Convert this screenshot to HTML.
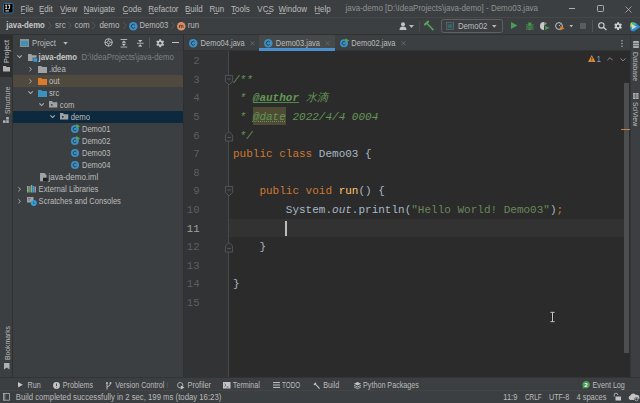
<!DOCTYPE html>
<html><head><meta charset="utf-8">
<style>
*{margin:0;padding:0;box-sizing:border-box}
html,body{width:640px;height:403px;overflow:hidden;background:#3c3f41;font-family:"Liberation Sans",sans-serif;color:#bbbbbb;position:relative}
div,svg,span.a{position:absolute}
svg{overflow:visible}
.t{position:absolute;white-space:nowrap;line-height:12px;transform-origin:0 8.75px;transform:scaleY(1.15)}
.m{font-size:8px}
.nv{font-size:8px}
.tr{font-size:7.7px}
.tb{font-size:7.2px}
.st{font-size:7.5px}
.tab{font-size:7.5px}
.vt{position:absolute;white-space:nowrap;font-size:6.8px;line-height:8px;transform-origin:0 0}
.code{position:absolute;font-family:"Liberation Mono",monospace;font-size:11px;line-height:18.6px;white-space:pre;color:#a9b7c6}
.kw{color:#cc7832}
.cm{color:#629755;font-style:italic}
.tag{color:#629755;font-weight:bold;font-style:italic;text-decoration:underline;text-decoration-thickness:1.3px;text-decoration-color:#4e8a4c}
.ln{position:absolute;font-family:"Liberation Mono",monospace;font-size:11px;line-height:18.6px;color:#5c5f62;white-space:pre;text-align:right}
</style></head><body>

<!-- ============ MENU BAR ============ -->
<div style="left:0;top:0;width:640px;height:18px;background:#3c3f41"></div>
<svg style="left:3px;top:3px" width="10.5" height="10.5" viewBox="0 0 10.5 10.5"><rect x="0.5" y="0.5" width="9.5" height="9.5" rx="1" fill="#000" stroke="#3a6d95" stroke-width="1"/><path d="M2.2 2.2H4.2M3.2 2.2V5.6M2.2 5.6H4.2M5 2.2H7.2M6.6 2.2V5Q6.6 5.7 5.9 5.7H5.2" stroke="#f0f0f0" stroke-width="0.9" fill="none"/><rect x="2.4" y="7.3" width="3.5" height="1.2" fill="#d0d0d0"/></svg>
<div class="t m" style="top:4.2px;left:20.5px;">File</div>
<div class="t m" style="top:4.2px;left:39px;">Edit</div>
<div class="t m" style="top:4.2px;left:60px;">View</div>
<div class="t m" style="top:4.2px;left:83.4px;">Navigate</div>
<div class="t m" style="top:4.2px;left:122.5px;">Code</div>
<div class="t m" style="top:4.2px;left:148.3px;">Refactor</div>
<div class="t m" style="top:4.2px;left:185px;">Build</div>
<div class="t m" style="top:4.2px;left:209.6px;">Run</div>
<div class="t m" style="top:4.2px;left:231px;">Tools</div>
<div class="t m" style="top:4.2px;left:257.3px;">VCS</div>
<div class="t m" style="top:4.2px;left:278.5px;">Window</div>
<div class="t m" style="top:4.2px;left:314.3px;">Help</div>
<!-- mnemonic underlines -->
<div style="left:21px;top:12.6px;width:4px;height:0.7px;background:#999"></div>
<div style="left:39.5px;top:12.6px;width:4px;height:0.7px;background:#999"></div>
<div style="left:60.5px;top:12.6px;width:5px;height:0.7px;background:#999"></div>
<div style="left:84px;top:12.6px;width:5px;height:0.7px;background:#999"></div>
<div style="left:123px;top:12.6px;width:5px;height:0.7px;background:#999"></div>
<div style="left:149px;top:12.6px;width:5px;height:0.7px;background:#999"></div>
<div style="left:185.5px;top:12.6px;width:5px;height:0.7px;background:#999"></div>
<div style="left:214px;top:12.6px;width:4px;height:0.7px;background:#999"></div>
<div style="left:231.5px;top:12.6px;width:4px;height:0.7px;background:#999"></div>
<div style="left:266px;top:12.6px;width:5px;height:0.7px;background:#999"></div>
<div style="left:279px;top:12.6px;width:7px;height:0.7px;background:#999"></div>
<div style="left:315px;top:12.6px;width:5px;height:0.7px;background:#999"></div>
<div class="t m" style="top:4.2px;left:345.5px;top:2.5px;color:#8f9193">java-demo [D:\IdeaProjects\java-demo] - Demo03.java</div>
<div style="left:569px;top:8px;width:6px;height:1px;background:#b0b0b0"></div>
<div style="left:597px;top:5px;width:6.8px;height:6.8px;border:1px solid #a9a9a9;border-radius:1.2px"></div>
<svg style="left:624px;top:4.5px" width="8" height="8" viewBox="0 0 8 8"><path d="M1.5 1.5L7.5 7.5M7.5 1.5L1.5 7.5" stroke="#b0b0b0" stroke-width="0.8"/></svg>

<!-- ============ NAV BAR ============ -->
<div style="left:0;top:17px;width:640px;height:1px;background:#454749"></div>

<div class="t nv" style="left:6.3px;top:20.4px;font-weight:bold;font-size:7.8px;color:#c8c8c8">java-demo</div>
<svg style="left:47.5px;top:21px" width="4" height="9" viewBox="0 0 4 8"><path d="M0.5 0.5L3 4L0.5 7.5" stroke="#66686a" stroke-width="0.6" fill="none"/></svg>
<div class="t nv" style="left:55px;top:20.4px">src</div>
<svg style="left:67.5px;top:21px" width="4" height="9" viewBox="0 0 4 8"><path d="M0.5 0.5L3 4L0.5 7.5" stroke="#66686a" stroke-width="0.6" fill="none"/></svg>
<div class="t nv" style="left:74.6px;top:20.4px">com</div>
<svg style="left:92px;top:21px" width="4" height="9" viewBox="0 0 4 8"><path d="M0.5 0.5L3 4L0.5 7.5" stroke="#66686a" stroke-width="0.6" fill="none"/></svg>
<div class="t nv" style="left:99.4px;top:20.4px">demo</div>
<svg style="left:122.5px;top:21px" width="4" height="9" viewBox="0 0 4 8"><path d="M0.5 0.5L3 4L0.5 7.5" stroke="#66686a" stroke-width="0.6" fill="none"/></svg>
<svg style="left:128.5px;top:21.5px" width="8.5" height="8.5" viewBox="0 0 8 8"><circle cx="4" cy="4" r="4" fill="#3d8fc1"/><path d="M5.4 2.9A1.8 1.8 0 1 0 5.4 5.1" stroke="#1e3c52" stroke-width="0.9" fill="none"/></svg>
<div class="t nv" style="left:139.5px;top:20.4px;font-size:7.6px">Demo03</div>
<svg style="left:171px;top:21px" width="4" height="9" viewBox="0 0 4 8"><path d="M0.5 0.5L3 4L0.5 7.5" stroke="#66686a" stroke-width="0.6" fill="none"/></svg>
<svg style="left:177.3px;top:21.5px" width="8.5" height="8.5" viewBox="0 0 8 8"><circle cx="4" cy="4" r="4" fill="#d9906a"/><path d="M2.3 5.6V3M2.3 3.4Q3.2 2.6 4 3.4V5.6M4 3.4Q4.8 2.6 5.7 3.4V5.6" stroke="#4a2a1a" stroke-width="0.7" fill="none"/></svg>
<div class="t nv" style="left:187.7px;top:20.4px">run</div>

<!-- right toolbar -->
<svg style="left:398.5px;top:21.5px" width="10" height="8" viewBox="0 0 10 8"><circle cx="4" cy="2.3" r="2" fill="#c4c4c4"/><path d="M0.5 8Q0.5 4.6 4 4.6Q7.5 4.6 7.5 8Z" fill="#c4c4c4"/></svg>
<svg style="left:409px;top:25px" width="5" height="3" viewBox="0 0 5 3"><path d="M0 0H5L2.5 3Z" fill="#b8b8b8"/></svg>
<div style="left:419px;top:20.5px;width:1px;height:11px;background:#494c4e"></div>
<svg style="left:424px;top:21px" width="10" height="9.5" viewBox="0 0 10 9.5"><path d="M0.9 3.6L4.2 0.6" stroke="#57a65a" stroke-width="2" stroke-linecap="round"/><path d="M2.8 2.3L9 8.6" stroke="#57a65a" stroke-width="1.5" stroke-linecap="round"/></svg>
<div style="left:440.5px;top:19px;width:62.5px;height:14px;border:0.8px solid #5e6163;border-radius:2.5px"></div>
<svg style="left:446.4px;top:22px" width="8.2" height="7.7" viewBox="0 0 8 8"><rect x="0.4" y="0.4" width="7.2" height="7.2" fill="#3c4345" stroke="#6b6e70" stroke-width="0.7"/><rect x="1.5" y="2.2" width="5" height="4.2" fill="#2f5f70"/><rect x="2.5" y="3.2" width="3" height="2" fill="#3a6e5a"/></svg>
<div class="t" style="left:457.9px;top:20.9px;font-size:7.8px">Demo02</div>
<svg style="left:492.3px;top:24.8px" width="4.5" height="2.8" viewBox="0 0 5 3"><path d="M0 0H5L2.5 3Z" fill="#b8b8b8"/></svg>
<svg style="left:510.8px;top:22.1px" width="6.5" height="7" viewBox="0 0 6.5 7"><path d="M0 0L6.5 3.5L0 7Z" fill="#499c54"/></svg>
<svg style="left:525.8px;top:21.8px" width="7.6" height="8" viewBox="0 0 7.6 8"><path d="M2.3 0.2L3 1.2M5.3 0.2L4.6 1.2" stroke="#499c54" stroke-width="0.7"/><ellipse cx="3.8" cy="1.9" rx="1.6" ry="1.1" fill="#499c54"/><ellipse cx="3.8" cy="5" rx="2.6" ry="2.9" fill="#499c54"/><path d="M0 2.8H1.4M7.6 2.8H6.2M0 5H1.2M7.6 5H6.4M0 7.2H1.4M7.6 7.2H6.2" stroke="#499c54" stroke-width="0.9"/><path d="M1.4 4.2H6.2M1.4 6.1H6.2" stroke="#3c3f41" stroke-width="0.85"/></svg>
<svg style="left:540.3px;top:22.2px" width="9.5" height="8" viewBox="0 0 9.5 8"><path d="M4 0A4 4 0 1 0 4 8Z" fill="#c9c9c9"/><path d="M4 0A4 4 0 0 1 7 1.5L4 4Z" fill="#8a8a8a"/><path d="M5.2 3.8L9.5 6L5.2 8Z" fill="#499c54"/></svg>
<svg style="left:554.9px;top:21.9px" width="9.5" height="8.5" viewBox="0 0 9.5 8.5"><circle cx="4" cy="4" r="3.4" fill="none" stroke="#c4c4c4" stroke-width="1"/><path d="M4 4L5.5 2.5" stroke="#c4c4c4" stroke-width="0.9"/><path d="M5.3 4L9.5 6.3L5.3 8.5Z" fill="#e07f2f"/></svg>
<svg style="left:568.7px;top:25.1px" width="4.5" height="2.3" viewBox="0 0 5 3"><path d="M0 0H5L2.5 3Z" fill="#b8b8b8"/></svg>
<div style="left:580px;top:23px;width:6px;height:6px;background:#5a5d5f"></div>
<div style="left:592.3px;top:20px;width:0.8px;height:12px;background:#515456"></div>
<svg style="left:598.3px;top:21.8px" width="9" height="8.2" viewBox="0 0 9 8.2"><circle cx="3.4" cy="3.4" r="2.7" fill="none" stroke="#cfcfcf" stroke-width="1.1"/><path d="M5.3 5.3L8.5 8" stroke="#cfcfcf" stroke-width="1.2"/></svg>
<svg style="left:614.2px;top:21.8px" width="8.2" height="8.2" viewBox="0 0 10 10"><path d="M3.73 1.74 L3.93 0.22 L6.07 0.22 L6.27 1.74 L7.19 2.27 L8.61 1.68 L9.68 3.53 L8.46 4.46 L8.46 5.54 L9.68 6.47 L8.61 8.32 L7.19 7.73 L6.27 8.26 L6.07 9.78 L3.93 9.78 L3.73 8.26 L2.81 7.73 L1.39 8.32 L0.32 6.47 L1.54 5.54 L1.54 4.46 L0.32 3.53 L1.39 1.68 L2.81 2.27Z" fill="#cfcfcf"/><circle cx="5" cy="5" r="1.5" fill="#3c3f41"/></svg>
<svg style="left:629.5px;top:21.5px" width="10.5" height="9.5" viewBox="0 0 10.5 9.5"><path d="M2 0.3Q1 0.3 0.6 2L0.4 7Q0.6 9.2 2.5 9.3L4 9.2L10.5 5L6 1.2Q4 0.2 2 0.3Z" fill="#2a8fd8"/><path d="M2 0.3Q1 0.3 0.6 2L0.5 6Q2 4 5 3.5L6.5 1.6Q4 0.2 2 0.3Z" fill="#3dbf7a"/><path d="M1.5 0.6Q0.7 1 0.6 2L0.5 5L3 3.5Z" fill="#e5c25a"/><path d="M1.8 2.3L6.8 4.8L1.8 7.4Z" fill="#d8d8c8"/></svg>

<!-- ============ LEFT STRIPE ============ -->
<div style="left:0;top:34px;width:12px;height:343px;background:#3c3f41"></div>
<div style="left:12px;top:34px;width:1px;height:343px;background:#2e3032"></div>
<div style="left:0;top:34px;width:12px;height:43px;background:#2d2f31"></div>
<div class="vt" style="left:3.3px;top:62.5px;transform:rotate(-90deg);color:#c4c4c4;font-size:7.4px">Project</div>
<svg style="left:3px;top:66px" width="7" height="5.5" viewBox="0 0 7 5.5"><path d="M0 0H2.8L3.5 1H7V5.5H0Z" fill="#afb1b3"/></svg>
<div class="vt" style="left:3.5px;top:113.5px;transform:rotate(-90deg);color:#bbbbbb">Structure</div>
<svg style="left:3.3px;top:116.8px" width="6" height="6" viewBox="0 0 6 6"><rect x="3.2" y="0" width="2.6" height="2.6" fill="#afb1b3"/><rect x="0" y="3.3" width="2.6" height="2.6" fill="#afb1b3"/><rect x="3.2" y="3.3" width="2.6" height="2.6" fill="#afb1b3"/></svg>
<div class="vt" style="left:3.6px;top:359.8px;transform:rotate(-90deg);color:#bbbbbb">Bookmarks</div>
<svg style="left:3.5px;top:362.7px" width="5.5" height="6.5" viewBox="0 0 5.5 6.5"><path d="M0 0H5.5V6.5L2.75 4.5L0 6.5Z" fill="#afb1b3"/></svg>

<!-- ============ PROJECT PANEL ============ -->
<div style="left:13.3px;top:34px;width:169.5px;height:343px;background:#3c3f41"></div>
<div style="left:183px;top:34px;width:1px;height:343px;background:#2e3032"></div>
<svg style="left:20px;top:38.7px" width="9" height="8" viewBox="0 0 9 8"><rect x="0" y="0" width="9" height="8" fill="#8d9091"/><rect x="1" y="2" width="7" height="5" fill="#3d92b8"/></svg>
<div class="t" style="left:32px;top:37.7px;font-size:7.7px">Project</div>
<svg style="left:63.3px;top:42px" width="5" height="2.7" viewBox="0 0 5 3"><path d="M0 0H5L2.5 3Z" fill="#b8b8b8"/></svg>
<svg style="left:104.2px;top:38.3px" width="9.2" height="8.8" viewBox="0 0 10 10"><circle cx="5" cy="5" r="4.2" fill="none" stroke="#c4c4c4" stroke-width="1"/><circle cx="5" cy="5" r="1.7" fill="none" stroke="#c4c4c4" stroke-width="0.9"/><path d="M5 0.5V3M5 7V9.5M0.5 5H3M7 5H9.5" stroke="#c4c4c4" stroke-width="0.9"/></svg>
<svg style="left:120.4px;top:38.5px" width="7.8" height="8.5" viewBox="0 0 8 9"><path d="M0.5 0.5H7.5M0.5 8.5H7.5" stroke="#c4c4c4" stroke-width="0.9"/><path d="M4 1.5L6.3 4H1.7ZM4 7.5L6.3 5H1.7Z" fill="#c4c4c4"/></svg>
<svg style="left:135.9px;top:38.5px" width="8.4" height="8.5" viewBox="0 0 8 9"><path d="M0.5 4.5H7.5" stroke="#c4c4c4" stroke-width="0.9"/><path d="M4 3.5L6.3 1H1.7ZM4 5.5L6.3 8H1.7Z" fill="#c4c4c4"/></svg>
<div style="left:149.3px;top:38px;width:0.6px;height:10px;background:#55585a"></div>
<svg style="left:155.6px;top:38.5px" width="8.4" height="8.4" viewBox="0 0 10 10"><path d="M3.73 1.74 L3.93 0.22 L6.07 0.22 L6.27 1.74 L7.19 2.27 L8.61 1.68 L9.68 3.53 L8.46 4.46 L8.46 5.54 L9.68 6.47 L8.61 8.32 L7.19 7.73 L6.27 8.26 L6.07 9.78 L3.93 9.78 L3.73 8.26 L2.81 7.73 L1.39 8.32 L0.32 6.47 L1.54 5.54 L1.54 4.46 L0.32 3.53 L1.39 1.68 L2.81 2.27Z" fill="#c4c4c4"/><circle cx="5" cy="5" r="1.5" fill="#3c3f41"/></svg>
<div style="left:171.7px;top:42.3px;width:7.3px;height:1px;background:#c4c4c4"></div>

<!-- tree rows -->
<div style="left:13.3px;top:75px;width:169.5px;height:12px;background:#4f4a3d"></div>
<div style="left:13.3px;top:111px;width:169.5px;height:12.3px;background:#0d293e"></div>

<svg style="left:17px;top:55.3px" width="5.2" height="3" viewBox="0 0 5 3"><path d="M0.3 0.3L2.5 2.6L4.7 0.3" stroke="#b0b2b4" stroke-width="1.05" fill="none"/></svg>
<svg style="left:27.5px;top:53.5px" width="9.5" height="8" viewBox="0 0 9.5 8"><path d="M0 0H3.3L4.2 1.2H8.5V7H0Z" fill="#9fa3a6"/><rect x="5" y="4" width="4.5" height="4" fill="#389fd6" stroke="#3c3f41" stroke-width="0.6"/></svg>
<div class="t tr" style="margin-top:0.8px;left:38.5px;top:51px;font-weight:bold;font-size:7.8px;color:#c8c8c8">java-demo</div>
<div class="t tr" style="margin-top:0.8px;left:81.4px;top:51px;color:#7d7f81;font-size:7.85px">D:\IdeaProjects\java-demo</div>

<svg style="left:28.8px;top:66.8px" width="3" height="4.5" viewBox="0 0 3 5"><path d="M0.3 0.3L2.6 2.5L0.3 4.7" stroke="#b0b2b4" stroke-width="1.05" fill="none"/></svg>
<svg style="left:38px;top:65.5px" width="9" height="7" viewBox="0 0 9 7"><path d="M0 0H3.3L4.2 1.1H9V7H0Z" fill="#9fa3a6"/></svg>
<div class="t tr" style="margin-top:0.8px;left:49px;top:63px">.idea</div>

<svg style="left:28.8px;top:78.8px" width="3" height="4.5" viewBox="0 0 3 5"><path d="M0.3 0.3L2.6 2.5L0.3 4.7" stroke="#b0b2b4" stroke-width="1.05" fill="none"/></svg>
<svg style="left:38px;top:77.5px" width="9" height="7" viewBox="0 0 9 7"><path d="M0 0H3.3L4.2 1.1H9V7H0Z" fill="#dc7a2c"/></svg>
<div class="t tr" style="margin-top:0.8px;left:49px;top:75px">out</div>

<svg style="left:28.2px;top:91.3px" width="5.2" height="3" viewBox="0 0 5 3"><path d="M0.3 0.3L2.5 2.6L4.7 0.3" stroke="#b0b2b4" stroke-width="1.05" fill="none"/></svg>
<svg style="left:38px;top:89.5px" width="9" height="7" viewBox="0 0 9 7"><path d="M0 0H3.3L4.2 1.1H9V7H0Z" fill="#3b92bd"/></svg>
<div class="t tr" style="margin-top:0.8px;left:49px;top:87px">src</div>

<svg style="left:39.3px;top:103.3px" width="5.2" height="3" viewBox="0 0 5 3"><path d="M0.3 0.3L2.5 2.6L4.7 0.3" stroke="#b0b2b4" stroke-width="1.05" fill="none"/></svg>
<svg style="left:49.1px;top:101.3px" width="8.3" height="6.7" viewBox="0 0 9 7"><path d="M0 0H3.3L4.2 1.1H9V7H0Z" fill="#9fa3a6"/><circle cx="3" cy="4" r="1" fill="#3c3f41"/></svg>
<div class="t tr" style="margin-top:0.8px;left:59.8px;top:99px">com</div>

<svg style="left:49.8px;top:115.3px" width="5.2" height="3" viewBox="0 0 5 3"><path d="M0.3 0.3L2.5 2.6L4.7 0.3" stroke="#b0b2b4" stroke-width="1.05" fill="none"/></svg>
<svg style="left:60.1px;top:113.3px" width="8.3" height="6.7" viewBox="0 0 9 7"><path d="M0 0H3.3L4.2 1.1H9V7H0Z" fill="#9fa3a6"/><circle cx="3" cy="4" r="1" fill="#0d293e"/></svg>
<div class="t tr" style="margin-top:0.8px;left:70.7px;top:111px">demo</div>

<svg style="left:70.9px;top:125.4px" width="8.8" height="8" viewBox="0 0 9 8"><circle cx="4" cy="4" r="4" fill="#3d8fc1"/><path d="M5.4 2.9A1.8 1.8 0 1 0 5.4 5.1" stroke="#1e3c52" stroke-width="0.9" fill="none"/><path d="M5.3 -1L9.3 1.3L5.3 3.6Z" fill="#4fa45a"/></svg>
<div class="t tr" style="margin-top:0.8px;left:82px;top:123.3px;font-size:7.5px">Demo01</div>
<svg style="left:70.9px;top:137.4px" width="8.8" height="8" viewBox="0 0 9 8"><circle cx="4" cy="4" r="4" fill="#3d8fc1"/><path d="M5.4 2.9A1.8 1.8 0 1 0 5.4 5.1" stroke="#1e3c52" stroke-width="0.9" fill="none"/><path d="M5.3 -1L9.3 1.3L5.3 3.6Z" fill="#4fa45a"/></svg>
<div class="t tr" style="margin-top:0.8px;left:82px;top:135.3px;font-size:7.5px">Demo02</div>
<svg style="left:70.9px;top:149.4px" width="8" height="8" viewBox="0 0 8 8"><circle cx="4" cy="4" r="4" fill="#3d8fc1"/><path d="M5.4 2.9A1.8 1.8 0 1 0 5.4 5.1" stroke="#1e3c52" stroke-width="0.9" fill="none"/></svg>
<div class="t tr" style="margin-top:0.8px;left:82px;top:147.3px;font-size:7.5px">Demo03</div>
<svg style="left:70.9px;top:161.4px" width="8" height="8" viewBox="0 0 8 8"><circle cx="4" cy="4" r="4" fill="#3d8fc1"/><path d="M5.4 2.9A1.8 1.8 0 1 0 5.4 5.1" stroke="#1e3c52" stroke-width="0.9" fill="none"/></svg>
<div class="t tr" style="margin-top:0.8px;left:82px;top:159.3px;font-size:7.5px">Demo04</div>

<svg style="left:39.8px;top:173.3px" width="7.5" height="8.2" viewBox="0 0 7.5 8.2"><path d="M0 0H4.5L6.5 2V8.2H0Z" fill="#9fa3a6"/><rect x="3" y="4.8" width="4.5" height="3.4" fill="#1f1f1f"/></svg>
<div class="t tr" style="margin-top:0.8px;left:48.5px;top:171px;font-size:8px">java-demo.iml</div>

<svg style="left:17.6px;top:186.8px" width="3" height="4.5" viewBox="0 0 3 5"><path d="M0.3 0.3L2.6 2.5L0.3 4.7" stroke="#b0b2b4" stroke-width="1.05" fill="none"/></svg>
<svg style="left:27.2px;top:185px" width="9" height="7.5" viewBox="0 0 9 7.5"><rect x="0" y="1" width="1.6" height="6.5" fill="#9fa3a6"/><rect x="1.9" y="1" width="1.8" height="6.5" fill="#59a14f"/><rect x="4" y="0" width="1.3" height="7.5" fill="#9fa3a6"/><rect x="5.6" y="1" width="1.5" height="6.5" fill="#3aa0e0"/><rect x="7.5" y="1.5" width="1.4" height="6" fill="#9fa3a6"/></svg>
<div class="t tr" style="margin-top:0.8px;left:38.6px;top:183px">External Libraries</div>

<svg style="left:17.6px;top:198.8px" width="3" height="4.5" viewBox="0 0 3 5"><path d="M0.3 0.3L2.6 2.5L0.3 4.7" stroke="#b0b2b4" stroke-width="1.05" fill="none"/></svg>
<svg style="left:27.2px;top:197px" width="10" height="9" viewBox="0 0 10 9"><rect x="0" y="0" width="6.5" height="5.5" fill="#9fa3a6"/><path d="M1 1.5H4M1 3H3" stroke="#5b5e60" stroke-width="0.6"/><circle cx="6.8" cy="6" r="3" fill="#389fd6"/><path d="M6.5 4.4V6.4H8.2" stroke="#1d4d70" stroke-width="0.6" fill="none"/></svg>
<div class="t tr" style="margin-top:0.8px;left:38.6px;top:195px;font-size:7.6px">Scratches and Consoles</div>

<!-- ============ TAB BAR ============ -->
<div style="left:183.6px;top:34px;width:446.8px;height:16.5px;background:#3c3f41"></div>
<div style="left:183.6px;top:34px;width:446.8px;height:0.8px;background:#323436"></div>
<div style="left:183.6px;top:50.3px;width:446.8px;height:0.8px;background:#323232"></div>
<div style="left:259px;top:34.8px;width:76px;height:15.7px;background:#45494a"></div>
<div style="left:259px;top:48.4px;width:76px;height:2.4px;background:#4a90cf"></div>

<svg style="left:189.3px;top:38.9px" width="8.5" height="8.5" viewBox="0 0 8 8"><circle cx="4" cy="4" r="4" fill="#3d8fc1"/><path d="M5.4 2.9A1.8 1.8 0 1 0 5.4 5.1" stroke="#1e3c52" stroke-width="0.9" fill="none"/></svg>
<div class="t tab" style="left:200.6px;top:38px">Demo04.java</div>
<svg style="left:250.3px;top:40.5px" width="5" height="4.5" viewBox="0 0 5 5"><path d="M0.3 0.3L4.7 4.7M4.7 0.3L0.3 4.7" stroke="#77797b" stroke-width="0.7"/></svg>

<svg style="left:264.3px;top:38.9px" width="8.5" height="8.5" viewBox="0 0 8 8"><circle cx="4" cy="4" r="4" fill="#3d8fc1"/><path d="M5.4 2.9A1.8 1.8 0 1 0 5.4 5.1" stroke="#1e3c52" stroke-width="0.9" fill="none"/></svg>
<div class="t tab" style="left:275.8px;top:38px">Demo03.java</div>
<svg style="left:325.3px;top:40.5px" width="5" height="4.5" viewBox="0 0 5 5"><path d="M0.3 0.3L4.7 4.7M4.7 0.3L0.3 4.7" stroke="#77797b" stroke-width="0.7"/></svg>

<svg style="left:340.3px;top:38.9px" width="9" height="8.5" viewBox="0 0 9 8"><circle cx="4" cy="4" r="4" fill="#3d8fc1"/><path d="M5.4 2.9A1.8 1.8 0 1 0 5.4 5.1" stroke="#1e3c52" stroke-width="0.9" fill="none"/><path d="M5.3 -1L9.3 1.3L5.3 3.6Z" fill="#4fa45a"/></svg>
<div class="t tab" style="left:351.3px;top:38px">Demo02.java</div>
<svg style="left:401px;top:40.5px" width="5" height="4.5" viewBox="0 0 5 5"><path d="M0.3 0.3L4.7 4.7M4.7 0.3L0.3 4.7" stroke="#77797b" stroke-width="0.7"/></svg>
<svg style="left:621px;top:40px" width="2" height="7" viewBox="0 0 2 7"><circle cx="1" cy="0.8" r="0.8" fill="#aaa"/><circle cx="1" cy="3.5" r="0.8" fill="#aaa"/><circle cx="1" cy="6.2" r="0.8" fill="#aaa"/></svg>

<!-- ============ EDITOR ============ -->
<div style="left:183.6px;top:51px;width:446.8px;height:326px;background:#2b2b2b"></div>
<div style="left:183.6px;top:51px;width:45px;height:326px;background:#313335"></div>
<div style="left:228px;top:51px;width:1px;height:326px;background:#48494b"></div>
<div style="left:229px;top:218.75px;width:394.5px;height:18.2px;background:#323232"></div>
<!-- @date highlight -->
<div style="left:253px;top:107.3px;width:33.1px;height:17.8px;background:#4e4a34"></div>

<div class="ln" style="left:183.5px;top:52.3px;width:16px;font-size:10.6px">2
3
4
5
6
7
8
9
10
<span style="color:#a4a3a3">11</span>
12
13
14
15</div>

<!-- fold markers -->
<svg style="left:224.5px;top:74.8px" width="8" height="10.5" viewBox="0 0 8 10.5"><path d="M0.4 0.4H7.6V6.6L4 10L0.4 6.6Z" fill="#2e3031" stroke="#5a5c5e" stroke-width="0.8"/><path d="M2.2 4H5.8" stroke="#6e7072" stroke-width="0.6"/></svg>
<svg style="left:224.5px;top:130.5px" width="8" height="10.5" viewBox="0 0 8 10.5"><path d="M0.4 10.1H7.6V3.9L4 0.5L0.4 3.9Z" fill="#2e3031" stroke="#5a5c5e" stroke-width="0.8"/><path d="M2.2 6.5H5.8" stroke="#6e7072" stroke-width="0.6"/></svg>
<svg style="left:224.5px;top:185.5px" width="8" height="10.5" viewBox="0 0 8 10.5"><path d="M0.4 0.4H7.6V6.6L4 10L0.4 6.6Z" fill="#2e3031" stroke="#5a5c5e" stroke-width="0.8"/><path d="M2.2 4H5.8" stroke="#6e7072" stroke-width="0.6"/></svg>
<svg style="left:224.5px;top:241.5px" width="8" height="10.5" viewBox="0 0 8 10.5"><path d="M0.4 10.1H7.6V3.9L4 0.5L0.4 3.9Z" fill="#2e3031" stroke="#5a5c5e" stroke-width="0.8"/><path d="M2.2 6.5H5.8" stroke="#6e7072" stroke-width="0.6"/></svg>

<div class="code" style="left:233px;top:52.3px">
<span class="cm">/**</span>
<span class="cm"> * </span><span class="tag">@author</span><span class="cm"> 水滴</span>
<span class="cm"> * </span><span class="cm" style="text-decoration:underline dotted;text-decoration-thickness:1px">@date</span><span class="cm"> 2022/4/4 0004</span>
<span class="cm"> */</span>
<span class="kw">public class </span>Demo03 {

    <span class="kw">public void </span><span style="color:#ffc66d">run</span>() {
        System.<i>out</i>.println(<span style="color:#6a8759">"Hello World! Demo03"</span>)<span class="kw">;</span>

    }

}
</div>
<div style="left:285px;top:220.6px;width:1.6px;height:15px;background:#bbbbbb"></div>

<svg style="left:549px;top:311px" width="7" height="12" viewBox="0 0 7 12"><path d="M1 1.3H6M3.5 1.3V10.7M1 10.7H6" stroke="#1e1e1e" stroke-width="2"/><path d="M1.3 1.3H5.7M3.5 1.3V10.7M1.3 10.7H5.7" stroke="#c8c8c8" stroke-width="1"/></svg>
<!-- warnings -->
<svg style="left:587.6px;top:55px" width="7.5" height="7" viewBox="0 0 7.5 7"><path d="M3.75 0L7.5 7H0Z" fill="#e08a35"/><path d="M3.75 2.2V4.6M3.75 5.4V6.2" stroke="#2b2b2b" stroke-width="0.9"/></svg>
<div class="t" style="left:596.6px;top:54.4px;font-size:8px;color:#7a9fbb">1</div>
<svg style="left:607px;top:57px" width="6" height="3.5" viewBox="0 0 6 3.5"><path d="M0.4 3.2L3 0.6L5.6 3.2" stroke="#a0a2a4" stroke-width="0.8" fill="none"/></svg>
<svg style="left:620px;top:57.5px" width="6" height="3.5" viewBox="0 0 6 3.5"><path d="M0.4 0.3L3 2.9L5.6 0.3" stroke="#a0a2a4" stroke-width="0.8" fill="none"/></svg>

<!-- scrollbar -->
<div style="left:624.2px;top:82.5px;width:5.3px;height:270.5px;background:#4c4e50"></div>
<div style="left:620.5px;top:128.7px;width:9.3px;height:1.5px;background:#c0834a"></div>

<!-- ============ RIGHT STRIPE ============ -->
<div style="left:631px;top:34px;width:9px;height:343px;background:#3c3f41"></div>
<div style="left:630px;top:34px;width:1px;height:343px;background:#333537"></div>
<svg style="left:633px;top:41px" width="6" height="7" viewBox="0 0 6 7"><rect x="0" y="0" width="6" height="7" rx="1" fill="#afb1b3"/><path d="M0 2.4H6M0 4.7H6" stroke="#3c3f41" stroke-width="0.7"/></svg>
<div class="vt" style="left:638.5px;top:51.8px;transform:rotate(90deg);color:#bbbbbb">Database</div>
<svg style="left:633px;top:93.3px" width="5.5" height="6" viewBox="0 0 5.5 6"><rect x="0" y="0" width="5.5" height="6" fill="#afb1b3"/><path d="M0 2H5.5M0 4H5.5M2.7 0V6" stroke="#3c3f41" stroke-width="0.5"/></svg>
<div class="vt" style="left:638.5px;top:102px;transform:rotate(90deg);color:#bbbbbb">SciView</div>

<!-- ============ BOTTOM TOOLBAR ============ -->
<div style="left:0;top:377px;width:640px;height:26px;background:#3c3f41"></div>
<div style="left:0;top:376.6px;width:640px;height:0.8px;background:#323436"></div>
<svg style="left:18.2px;top:382px" width="4.8" height="5.5" viewBox="0 0 4.8 5.5"><path d="M0 0L4.8 2.75L0 5.5Z" fill="#c4c4c4"/></svg>
<div class="t tb" style="left:27.6px;top:379.8px">Run</div>
<svg style="left:52.9px;top:381.5px" width="7" height="7" viewBox="0 0 7 7"><circle cx="3.5" cy="3.5" r="3.4" fill="#c4c4c4"/><path d="M3.5 1.5V4M3.5 4.9V5.6" stroke="#3c3f41" stroke-width="0.9"/></svg>
<div class="t tb" style="left:62.8px;top:379.8px">Problems</div>
<svg style="left:105.6px;top:381.5px" width="5.5" height="7.5" viewBox="0 0 5.5 7.5"><circle cx="1" cy="1" r="0.9" fill="#c4c4c4"/><circle cx="4.5" cy="1" r="0.9" fill="#c4c4c4"/><path d="M1 1V7.5M4.5 1Q4.5 4 1 5" stroke="#c4c4c4" stroke-width="0.9" fill="none"/></svg>
<div class="t tb" style="left:115.2px;top:379.8px">Version Control</div>
<div style="left:167.3px;top:382px;width:0.6px;height:6px;background:#4c4f51"></div>
<svg style="left:177px;top:381.5px" width="7.5" height="7.5" viewBox="0 0 7.5 7.5"><circle cx="3.2" cy="3.2" r="2.7" fill="none" stroke="#c4c4c4" stroke-width="0.8"/><path d="M3.8 3.6L7.5 5.6L3.8 7.5Z" fill="#c4c4c4"/></svg>
<div class="t tb" style="left:187.6px;top:379.8px;font-size:7.4px">Profiler</div>
<svg style="left:223px;top:381.8px" width="7.5" height="6.5" viewBox="0 0 7.5 6.5"><rect x="0" y="0" width="7.5" height="6.5" fill="#c4c4c4"/><path d="M1.5 1.8L3 3.2L1.5 4.6M3.5 5H5.5" stroke="#3c3f41" stroke-width="0.7" fill="none"/></svg>
<div class="t tb" style="left:232.8px;top:379.8px">Terminal</div>
<svg style="left:272.6px;top:382px" width="7" height="6" viewBox="0 0 7 6"><path d="M0 0.6H7M0 3H7M0 5.4H7" stroke="#c4c4c4" stroke-width="1"/></svg>
<div class="t tb" style="left:282.4px;top:379.8px;transform:scale(0.88,1.15)">TODO</div>
<svg style="left:313.4px;top:381.5px" width="7" height="7" viewBox="0 0 7 7"><path d="M0.5 2.3L2.3 0.5L3.5 1.1L2.9 2L7 6.2L6.2 7L2.2 2.8L1.4 3.3Z" fill="#c4c4c4"/></svg>
<div class="t tb" style="left:323.2px;top:379.8px">Build</div>
<svg style="left:353.5px;top:381.5px" width="7" height="7" viewBox="0 0 7 7"><path d="M3.5 0L7 1.7L3.5 3.4L0 1.7Z" fill="#c4c4c4"/><path d="M0 3.3L3.5 5L7 3.3M0 5L3.5 6.7L7 5" stroke="#c4c4c4" stroke-width="0.8" fill="none"/></svg>
<div class="t tb" style="left:363px;top:379.8px">Python Packages</div>
<svg style="left:581.9px;top:380.9px" width="8.2" height="7.8" viewBox="0 0 8.2 7.8"><path d="M4.1 0A3.9 3.7 0 1 1 2.3 7L0.4 7.8L1 5.8A3.9 3.7 0 0 1 4.1 0Z" fill="#4d9c54"/></svg>
<div style="left:582px;top:381.2px;width:8.2px;height:7.4px;font-size:6.2px;line-height:7.4px;text-align:center;color:#f4f4f4;font-weight:bold">2</div>
<div class="t tb" style="left:592.5px;top:379.8px">Event Log</div>

<!-- ============ STATUS BAR ============ -->
<div style="left:0;top:390px;width:640px;height:1px;background:#424547"></div>
<svg style="left:3.4px;top:393.4px" width="7" height="7.6" viewBox="0 0 7 7.6"><rect x="0.4" y="0.4" width="6.2" height="6.8" fill="none" stroke="#afb1b3" stroke-width="0.8"/><path d="M1.8 0.4V7.2" stroke="#afb1b3" stroke-width="0.7"/></svg>
<div class="t st" style="left:15.8px;top:391.6px;font-size:7.75px">Build completed successfully in 2 sec, 199 ms (today 16:23)</div>
<div class="t st" style="left:503.3px;top:391.6px">11:9</div>
<div class="t st" style="left:524.7px;top:391.6px;transform:scale(0.85,1.15)">CRLF</div>
<div class="t st" style="left:548.7px;top:391.6px;transform:scale(0.95,1.15)">UTF-8</div>
<div class="t st" style="left:576.4px;top:391.6px">4 spaces</div>
<svg style="left:612.9px;top:393px" width="8" height="7.5" viewBox="0 0 8 7.5"><path d="M1.2 3.5V2A1.8 1.8 0 0 1 4.8 2" stroke="#c4c4c4" stroke-width="0.8" fill="none"/><rect x="2.5" y="3.5" width="5.5" height="4" fill="#c4c4c4"/></svg>
<svg style="left:627.7px;top:392.5px" width="11.5" height="9" viewBox="0 0 11.5 9"><path d="M2.5 7A2.3 2.3 0 0 1 2.5 2.5A3 3 0 0 1 8 2A2.3 2.3 0 0 1 9.5 7Z" fill="#c4c4c4"/><circle cx="8.5" cy="6.5" r="2.2" fill="#3c3f41"/><circle cx="8.5" cy="6.5" r="1.4" fill="none" stroke="#c4c4c4" stroke-width="0.7"/></svg>
<div style="left:0;top:34px;width:640px;height:1px;background:#2f3133"></div>
<div style="left:13px;top:50px;width:170px;height:1px;background:#393b3d"></div>
</body></html>
